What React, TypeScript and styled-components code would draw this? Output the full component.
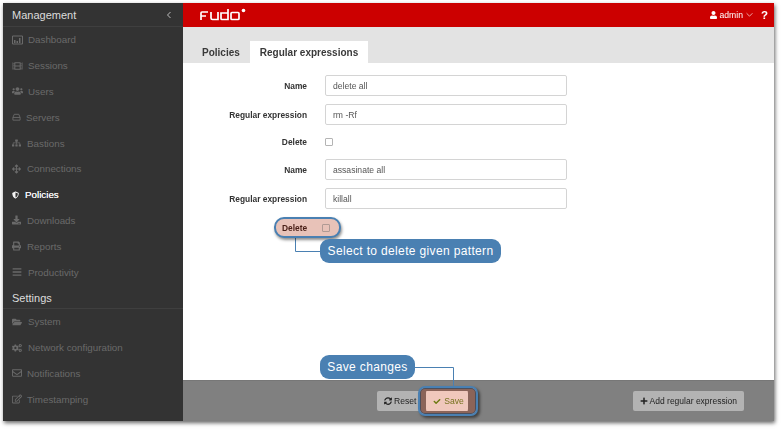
import React from "react";
import styled, { createGlobalStyle } from "styled-components";
import {
  FaBars, FaFilm, FaUsers, FaSitemap, FaArrowsAlt, FaDownload, FaPrint,
  FaFolderOpen, FaCogs, FaRegEnvelope, FaRegEdit, FaUser, FaSyncAlt, FaCheck, FaPlus, FaShieldAlt,
} from "react-icons/fa";

const GlobalStyle = createGlobalStyle`
  html, body { margin: 0; padding: 0; background: #fff; }
  body { width: 782px; height: 429px; overflow: hidden; font-family: "Liberation Sans", Arial, sans-serif; }
`;

const Frame = styled.div`
  position: relative;
  width: 782px;
  height: 429px;
  padding: 3px 8px 8px 3px;
  box-sizing: border-box;
  filter: blur(0.25px);
`;

const Window = styled.div`
  display: flex;
  width: 771px;
  height: 418px;
  background: #fff;
  box-shadow: 1px 2px 4px rgba(0, 0, 0, 0.6);
`;

const Sidebar = styled.aside`
  width: 180px;
  flex: none;
  background: #333;
  overflow: hidden;
`;

const SectionTitle = styled.div<{ $first?: boolean }>`
  display: flex;
  align-items: center;
  justify-content: space-between;
  height: ${(p) => (p.$first ? 22 : 20)}px;
  margin-top: ${(p) => (p.$first ? 0 : 2)}px;
  padding: 1px 11px 0 9px;
  border-bottom: 1px solid #3f3f3f;
  color: #dcdcdc;
  font-size: 11px;
`;

const Chevron = styled.svg`
  width: 6px;
  height: 8px;
`;

const NavList = styled.div`
  display: flex;
  flex-direction: column;
`;

const NavItem = styled.div<{ $active?: boolean; $gap: number; $icon: number }>`
  display: flex;
  align-items: center;
  gap: ${(p) => p.$gap}px;
  height: 25.8px;
  padding-left: 9px;
  color: ${(p) => (p.$active ? "#f4f4f4" : "#6a6a6a")};
  font-size: 9.8px;
  text-shadow: ${(p) => (p.$active ? "0 0 0.6px #fff" : "none")};
  svg { width: ${(p) => p.$icon}px; height: 10px; flex: none; }
`;

const HddIcon = () => (
  <svg viewBox="0 0 10 10">
    <path d="M1 5.5 L2.5 2 H7.5 L9 5.5 V8.5 H1 Z M1 5.5 H9" fill="none" stroke="currentColor" />
  </svg>
);

const DashIcon = () => (
  <svg viewBox="0 0 11 10">
    <path d="M0.5 1 H10.5 V9 H0.5 Z" fill="none" stroke="currentColor" />
    <path d="M2 5 H3.5 V8 H2 Z M4.5 6 H6 V8 H4.5 Z M7 3 H8.5 V8 H7 Z" fill="currentColor" />
  </svg>
);

const Main = styled.main`
  flex: 1;
  display: flex;
  flex-direction: column;
  min-width: 0;
`;

const TopBar = styled.header`
  display: flex;
  align-items: center;
  justify-content: space-between;
  height: 24px;
  padding: 0 6px 0 17px;
  background: #cc0000;
  color: #fff;
`;

const Logo = styled.svg`
  width: 46px;
  height: 14px;
`;

const UserMenu = styled.div`
  display: flex;
  align-items: center;
  gap: 3px;
  font-size: 8.6px;
  svg { width: 7px; height: 8px; }
`;

const Caret = styled.svg`
  width: 6px;
  height: 4px;
  margin-right: 5px;
`;

const Help = styled.span`
  font-size: 11.5px;
  font-weight: 700;
`;

const TabBar = styled.nav`
  display: flex;
  align-items: flex-end;
  height: 36px;
  padding-left: 9px;
  background: #e3e3e3;
`;

const Tab = styled.div<{ $active?: boolean }>`
  display: flex;
  align-items: center;
  height: 22px;
  padding: 0 10px;
  background: ${(p) => (p.$active ? "#fff" : "transparent")};
  color: #3a3a3a;
  font-size: 10px;
  font-weight: 700;
`;

const Form = styled.form`
  flex: 1;
  display: flex;
  flex-direction: column;
  padding-top: 8px;
`;

const Row = styled.div<{ $h: number }>`
  display: flex;
  align-items: center;
  gap: 18px;
  height: ${(p) => p.$h}px;
`;

const Label = styled.label`
  width: 124px;
  text-align: right;
  color: #333;
  font-size: 8.4px;
  font-weight: 700;
`;

const TextInput = styled.div`
  width: 242px;
  height: 21px;
  box-sizing: border-box;
  padding: 0 7px;
  display: flex;
  align-items: center;
  border: 1px solid #d4d4d4;
  border-radius: 2px;
  color: #555;
  font-size: 8.6px;
`;

const Check = styled.span<{ $ghost?: boolean }>`
  width: 6px;
  height: 6px;
  border: 1px solid ${(p) => (p.$ghost ? "#b09a94" : "#b4b4b4")};
  border-radius: 1px;
  background: ${(p) => (p.$ghost ? "transparent" : "#fff")};
`;

const Footer = styled.footer`
  height: 41px;
  display: flex;
  align-items: center;
  padding-left: 194px;
  background: #808080;
  box-sizing: border-box;
  border-top: 1px solid #777;
`;

const GrayButton = styled.div<{ $wide?: boolean }>`
  display: flex;
  align-items: center;
  gap: 2px;
  height: 20px;
  padding: 0 ${(p) => (p.$wide ? 7 : 5)}px 0 7px;
  box-sizing: border-box;
  border-radius: 2px;
  background: #b3b3b3;
  color: #222;
  font-size: ${(p) => (p.$wide ? 8.5 : 8.6)}px;
  margin-left: ${(p) => (p.$wide ? "auto" : "0")};
  margin-right: ${(p) => (p.$wide ? "30px" : "0")};
  svg { width: 8px; height: 8px; }
`;

const SaveButton = styled.div`
  position: relative;
  display: flex;
  align-items: center;
  justify-content: center;
  gap: 3px;
  width: 60px;
  height: 30px;
  margin-left: -3px;
  box-sizing: border-box;
  border: 2px solid #4a80b2;
  border-radius: 7px;
  background: #f0c8bc;
  box-shadow:
    inset 0 0 0 1px #4c4f5c,
    inset 6px 0 0 0 #8b6459,
    inset -8px 0 0 0 #8b6459,
    inset 0 3px 0 0 #8b6459,
    inset 0 -3px 0 0 #8b6459,
    2px 2px 3px rgba(0, 0, 0, 0.5);
  color: #77721f;
  font-size: 8.6px;
  svg { width: 8px; height: 7px; color: #6d7a12; }
`;

const DeleteHighlight = styled.div`
  position: absolute;
  left: 274px;
  top: 217px;
  width: 67px;
  height: 21px;
  box-sizing: border-box;
  display: flex;
  align-items: center;
  justify-content: space-between;
  padding: 0 9px 0 6px;
  border: 2px solid #4a80b2;
  border-radius: 10px;
  background: #e8c2b8;
  box-shadow: 1px 2px 3px rgba(0, 0, 0, 0.45);
  color: #4a2018;
  font-size: 8.4px;
  font-weight: 700;
`;

const Callout = styled.div<{ $x: number; $y: number; $w: number }>`
  position: absolute;
  left: ${(p) => p.$x}px;
  top: ${(p) => p.$y}px;
  width: ${(p) => p.$w}px;
  height: 24px;
  display: flex;
  align-items: center;
  justify-content: center;
  border-radius: 9px;
  background: #4a80b2;
  color: #fff;
  font-size: 12px;
  letter-spacing: 0.35px;
  white-space: nowrap;
`;

const Leader = styled.svg`
  position: absolute;
  left: 0;
  top: 0;
  width: 782px;
  height: 429px;
  pointer-events: none;
`;

const managementItems = [
  { label: "Dashboard", icon: <DashIcon />, gap: 5, w: 11 },
  { label: "Sessions", icon: <FaFilm />, gap: 5, w: 11 },
  { label: "Users", icon: <FaUsers />, gap: 5, w: 11 },
  { label: "Servers", icon: <HddIcon />, gap: 5, w: 9 },
  { label: "Bastions", icon: <FaSitemap />, gap: 6, w: 9 },
  { label: "Connections", icon: <FaArrowsAlt />, gap: 6, w: 9 },
  { label: "Policies", icon: <FaShieldAlt />, gap: 6, w: 7, active: true },
  { label: "Downloads", icon: <FaDownload />, gap: 6, w: 9 },
  { label: "Reports", icon: <FaPrint />, gap: 6, w: 9 },
  { label: "Productivity", icon: <FaBars />, gap: 6, w: 10 },
];

const settingsItems = [
  { label: "System", icon: <FaFolderOpen />, gap: 6, w: 10 },
  { label: "Network configuration", icon: <FaCogs />, gap: 6, w: 10 },
  { label: "Notifications", icon: <FaRegEnvelope />, gap: 5, w: 10 },
  { label: "Timestamping", icon: <FaRegEdit />, gap: 5, w: 10 },
];

const App = () => (
  <>
    <GlobalStyle />
    <Frame>
      <Window>
        <Sidebar>
          <SectionTitle $first>
            Management
            <Chevron viewBox="0 0 6 8">
              <path d="M4.5 1 L1.5 4 L4.5 7" fill="none" stroke="#bdbdbd" strokeWidth="1" />
            </Chevron>
          </SectionTitle>
          <NavList>
            {managementItems.map((item) => (
              <NavItem key={item.label} $active={item.active} $gap={item.gap} $icon={item.w}>
                {item.icon}
                {item.label}
              </NavItem>
            ))}
          </NavList>
          <SectionTitle>Settings</SectionTitle>
          <NavList>
            {settingsItems.map((item) => (
              <NavItem key={item.label} $gap={item.gap} $icon={item.w}>
                {item.icon}
                {item.label}
              </NavItem>
            ))}
          </NavList>
        </Sidebar>
        <Main>
          <TopBar>
            <Logo viewBox="0 0 46 14">
              <g fill="none" stroke="#fff" strokeWidth="1.7">
                <path d="M1 12 V5 Q1 4 2 4 H8 M1 8 H6" />
                <path d="M11 4 V10 Q11 11.5 12.5 11.5 H18 V4" />
                <path d="M28 1 V11.5 H22 Q21 11.5 21 10.5 V5 H28" />
                <rect x="31" y="4.5" width="8" height="7" rx="1" />
              </g>
              <circle cx="43.5" cy="2.5" r="1.8" fill="#fff" />
            </Logo>
            <UserMenu>
              <FaUser />
              admin
              <Caret viewBox="0 0 6 4">
                <path d="M0.5 0.5 L3 3 L5.5 0.5" fill="none" stroke="#f0b0b0" strokeWidth="0.8" />
              </Caret>
              <Help>?</Help>
            </UserMenu>
          </TopBar>
          <TabBar>
            <Tab>Policies</Tab>
            <Tab $active>Regular expressions</Tab>
          </TabBar>
          <Form>
            <Row $h={29}>
              <Label>Name</Label>
              <TextInput>delete all</TextInput>
            </Row>
            <Row $h={29}>
              <Label>Regular expression</Label>
              <TextInput>rm -Rf</TextInput>
            </Row>
            <Row $h={26}>
              <Label>Delete</Label>
              <Check />
            </Row>
            <Row $h={29}>
              <Label>Name</Label>
              <TextInput>assasinate all</TextInput>
            </Row>
            <Row $h={29}>
              <Label>Regular expression</Label>
              <TextInput>killall</TextInput>
            </Row>
          </Form>
          <Footer>
            <GrayButton>
              <FaSyncAlt />
              Reset
            </GrayButton>
            <SaveButton>
              <FaCheck />
              Save
            </SaveButton>
            <GrayButton $wide>
              <FaPlus />
              Add regular expression
            </GrayButton>
          </Footer>
        </Main>
      </Window>
      <Leader viewBox="0 0 782 429">
        <path d="M295.5 237 V251.5 H320" fill="none" stroke="#4a80b2" />
        <path d="M414 367.5 H453.5 V387" fill="none" stroke="#4a80b2" />
      </Leader>
      <DeleteHighlight>
        Delete
        <Check $ghost />
      </DeleteHighlight>
      <Callout $x={320} $y={239} $w={181}>Select to delete given pattern</Callout>
      <Callout $x={320} $y={355} $w={95}>Save changes</Callout>
    </Frame>
  </>
);

export default App;
